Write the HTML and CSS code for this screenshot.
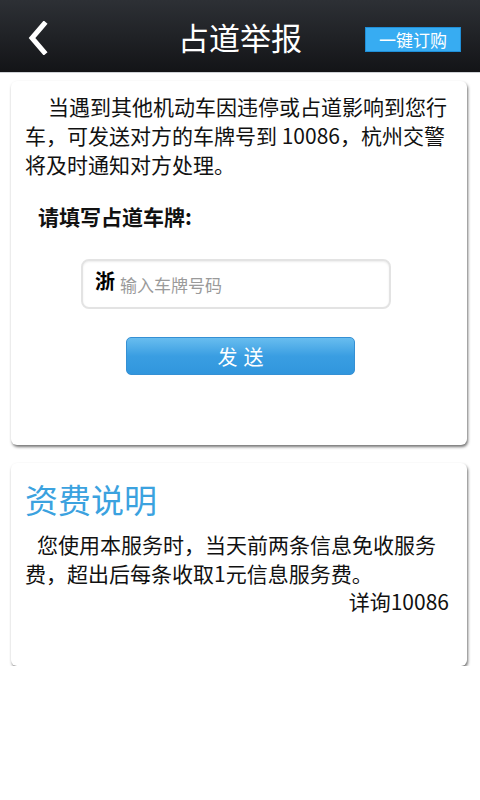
FILE: index.html
```html
<!DOCTYPE html>
<html lang="zh-CN">
<head>
  <meta charset="UTF-8" />
  <meta name="viewport" content="width=device-width, initial-scale=1.0"/>
  <title>占道举报</title>
  <link rel="stylesheet" href="styles.css">
</head>
<body>

  <div class="topbar">
    <span class="back">
      <svg width="20" height="34" viewBox="0 0 20 34">
        <path d="M16 3 L4 17 L16 31" fill="none" stroke="#fff" stroke-width="5" stroke-linecap="square"/>
      </svg>
    </span>
    <h1>占道举报</h1>
    <button class="order">一键订购</button>
  </div>

  <div class="card report">
    <p class="intro">当遇到其他机动车因违停或占道影响到您行车，可发送对方的车牌号到 10086，杭州交警将及时通知对方处理。</p>
    <div class="label">请填写占道车牌:</div>
    <div class="plate">
      <span class="prov">浙</span>
      <span class="hint">输入车牌号码</span>
    </div>
    <button class="send">发送</button>
  </div>

  <div class="card fee">
    <div class="fee-title">资费说明</div>
    <p class="fee-text">您使用本服务时，当天前两条信息免收服务费，超出后每条收取1元信息服务费。</p>
    <div class="fee-more">详询10086</div>
  </div>

</body>
</html>
```

FILE: styles.css
```css
body {
  margin: 0;
  background: #fff;
  font-family: "Noto Sans CJK SC", "Noto Sans", sans-serif;
  color: #111;
}

.topbar {
  height: 72px;
  background: linear-gradient(to bottom, #2d3035, #131417);
  border-bottom: 1px solid #cfd2d6;
  display: flex;
  align-items: center;
  justify-content: center;
  position: relative;
}

.topbar h1 {
  margin: 0;
  color: #fff;
  font-size: 31px;
  font-weight: normal;
}

.back {
  position: absolute;
  left: 28px;
  top: 21px;
}

.order {
  position: absolute;
  right: 19px;
  top: 27px;
  width: 96px;
  height: 25px;
  padding: 0;
  border: 1px solid #1f8fd8;
  background: #37acf2;
  color: #fff;
  font-family: inherit;
  font-size: 17px;
  line-height: 23px;
}

.card {
  margin: 8px 13px 0 11px;
  background: #fff;
  border-radius: 6px;
  box-shadow: 1px 2px 3px rgba(0, 0, 0, 0.55);
  padding: 11px 16px 0 14px;
}

.report {
  height: 353px;
}

.intro {
  margin: 0;
  font-size: 21px;
  line-height: 29px;
  text-indent: 23px;
}

.label {
  margin: 24px 0 0 13px;
  font-size: 21px;
  line-height: 27px;
  font-weight: bold;
}

.plate {
  margin: 29px 0 0 56px;
  width: 310px;
  height: 50px;
  box-sizing: border-box;
  border: 2px solid #e3e3e3;
  border-radius: 8px;
  box-shadow: inset 0 1px 2px rgba(0, 0, 0, 0.08);
  display: flex;
  align-items: center;
  gap: 5px;
  padding-left: 12px;
}

.prov {
  font-size: 20px;
  font-weight: bold;
  color: #000;
  margin-top: -8px;
}

.hint {
  font-size: 17px;
  color: #9a9a9a;
}

.send {
  display: block;
  margin: 28px 0 0 101px;
  width: 229px;
  height: 38px;
  border: 1px solid #3590d4;
  border-radius: 5px;
  background: linear-gradient(to bottom, #68bdef, #3a9ee2 50%, #3196dd);
  color: #fff;
  font-family: inherit;
  font-size: 20px;
  letter-spacing: 6px;
  padding: 0 0 0 6px;
}

.fee {
  margin-top: 18px;
  height: 185px;
  padding-top: 18px;
}

.fee-title {
  font-size: 33px;
  color: #3ba2df;
  line-height: 36px;
}

.fee-text {
  margin: 13px 0 0;
  font-size: 21px;
  line-height: 29px;
  text-indent: 12px;
}

.fee-more {
  text-align: right;
  font-size: 21px;
  line-height: 26px;
  padding-right: 2px;
}
```
